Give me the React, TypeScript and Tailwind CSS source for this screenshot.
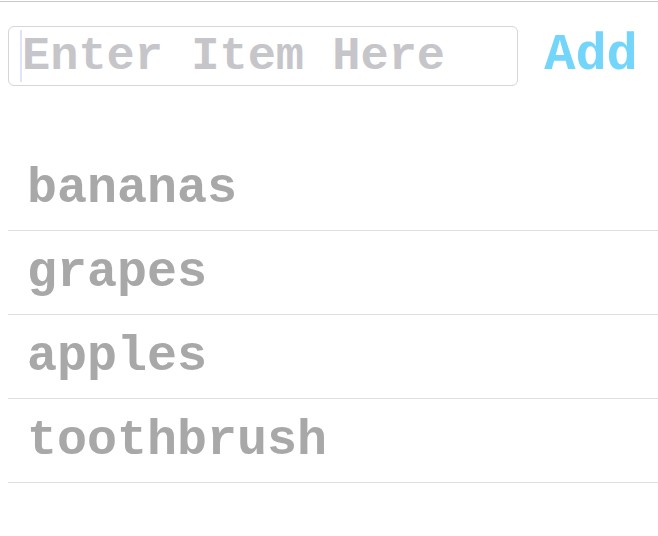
import { useState } from "react";

const ITEMS = ["bananas", "grapes", "apples", "toothbrush"];

export default function App() {
  const [items, setItems] = useState<string[]>(ITEMS);
  const [text, setText] = useState("");

  const add = () => {
    if (!text.trim()) return;
    setItems((v) => [...v, text.trim()]);
    setText("");
  };

  return (
    <div className="min-h-[536px] w-[658px] bg-white pt-px font-['Liberation_Mono','Courier_New',monospace]">
      <div className="border-t border-[#c8c8c8]" />

      {/* Input row */}
      <div className="flex items-center pl-2 pt-[24px]">
        <div className="relative h-[60px] w-[510px]">
          <input
            value={text}
            onChange={(e) => setText(e.target.value)}
            placeholder="Enter Item Here"
            className="h-full w-full rounded-md border border-[#d6d6d6] pl-[13px] text-[47px] font-bold text-[#a8a8a8] outline-none placeholder:text-[#c6c6ca]"
          />
          {text === "" && (
            <span className="pointer-events-none absolute left-[12px] top-[4px] h-[52px] w-[2px] bg-[#dfe3fb]" />
          )}
        </div>
        <button
          onClick={add}
          className="flex-1 pl-[6px] text-center text-[52px] font-bold leading-none text-[#74d5fa]"
        >
          Add
        </button>
      </div>

      {/* List */}
      <ul className="mt-[61px]">
        {items.map((item) => (
          <li
            key={item}
            className="ml-2 flex h-[84px] items-center border-b border-[#dedede] pl-[19px] text-[50px] font-bold text-[#a8a8a8]"
          >
            {item}
          </li>
        ))}
      </ul>
    </div>
  );
}
